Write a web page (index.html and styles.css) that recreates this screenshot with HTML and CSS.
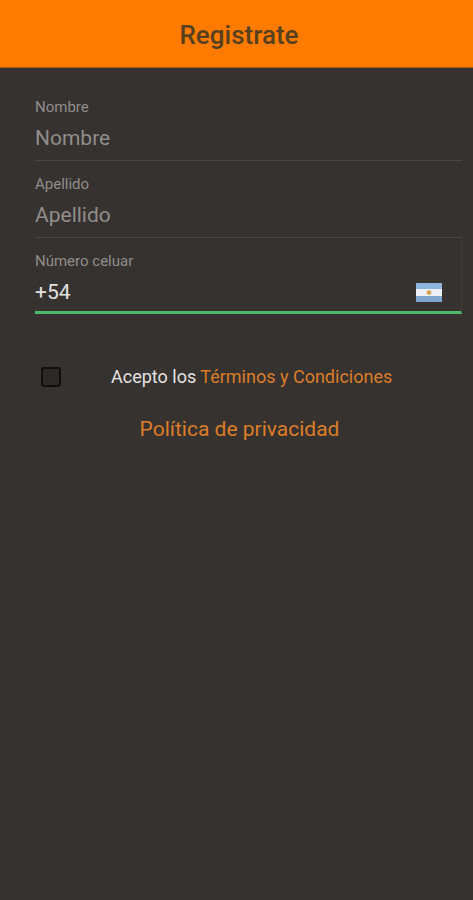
FILE: index.html
```html
<!DOCTYPE html>
<html lang="es">
<head>
<meta charset="utf-8">
<meta name="viewport" content="width=device-width, initial-scale=1">
<title>Registrate</title>
<link rel="stylesheet" href="styles.css">
</head>
<body>
<header class="app-bar"><h1 class="title">Registrate</h1></header>
<main>
  <form class="form">
    <div class="field">
      <label class="label" for="nombre">Nombre</label>
      <input class="input" id="nombre" type="text" placeholder="Nombre">
    </div>
    <div class="field">
      <label class="label" for="apellido">Apellido</label>
      <input class="input" id="apellido" type="text" placeholder="Apellido">
    </div>
    <div class="field field-active">
      <label class="label" for="celular">Número celuar</label>
      <div class="phone">
        <input class="input" id="celular" type="tel" value="+54">
        <svg class="flag" viewBox="0 0 52 38" aria-hidden="true">
          <rect width="52" height="38" fill="#8db4dc"/>
          <rect y="12" width="52" height="14" fill="#eef1f4"/>
          <rect y="26" width="52" height="12" fill="#7fa6cf"/>
          <circle cx="26" cy="19" r="5" fill="#dcb673"/>
          <circle cx="26" cy="19" r="3" fill="#c89a52"/>
        </svg>
      </div>
    </div>
    <div class="terms">
      <input class="check" id="acepto" type="checkbox">
      <label class="terms-text" for="acepto">Acepto los <a class="link" href="#terminos">Términos y Condiciones</a></label>
    </div>
    <p class="privacy"><a class="link" href="#privacidad">Política de privacidad</a></p>
  </form>
</main>
</body>
</html>
```
FILE: styles.css
```css
* {
  box-sizing: border-box;
}

body {
  margin: 0;
  min-height: 100vh;
  background: #363230;
  color: #e4e2e1;
  font-family: Roboto, "Liberation Sans", sans-serif;
}

.app-bar {
  display: flex;
  align-items: center;
  justify-content: center;
  height: 68px;
  padding-top: 2px;
  padding-left: 5px;
  background: #ff7b00;
  border-bottom: 1px solid #a75a1a;
}

.title {
  margin: 0;
  color: #56401f;
  font-size: 26px;
  font-weight: 500;
  line-height: 32px;
}

.form {
  padding: 16px 11px 16px 35px;
}

.field {
  padding: 14px 0 10px;
  border-bottom: 1px solid #4b4745;
}

.label {
  display: block;
  margin-bottom: 10px;
  color: #918d8b;
  font-size: 15px;
  line-height: 18px;
}

.input {
  display: block;
  width: 100%;
  min-width: 0;
  height: 24px;
  padding: 0;
  border: 0;
  outline: 0;
  background: transparent;
  color: #e4e2e1;
  font-family: inherit;
  font-size: 21px;
  line-height: 24px;
}

.input::placeholder {
  color: #918d8b;
  opacity: 1;
}

.field-active {
  padding-bottom: 7px;
  border-right: 1px solid #3f3b39;
  border-bottom: 3px solid #4dbb6b;
}

.phone {
  display: flex;
  align-items: center;
  padding-right: 19px;
}

.flag {
  flex: none;
  width: 26px;
  height: 19px;
}

.terms {
  display: flex;
  align-items: center;
  gap: 50px;
  margin-top: 51px;
  padding-left: 6px;
}

.check {
  appearance: none;
  flex: none;
  width: 20px;
  height: 20px;
  margin: 0;
  border: 2px solid #100f0e;
  border-radius: 3px;
  background: #2b2827;
}

.terms-text {
  font-size: 18px;
  line-height: 24px;
}

.link {
  color: #dc7d27;
  text-decoration: none;
}

.privacy {
  margin: 28px 0 0;
  padding-right: 18px;
  font-size: 21px;
  line-height: 24px;
  text-align: center;
}
```
